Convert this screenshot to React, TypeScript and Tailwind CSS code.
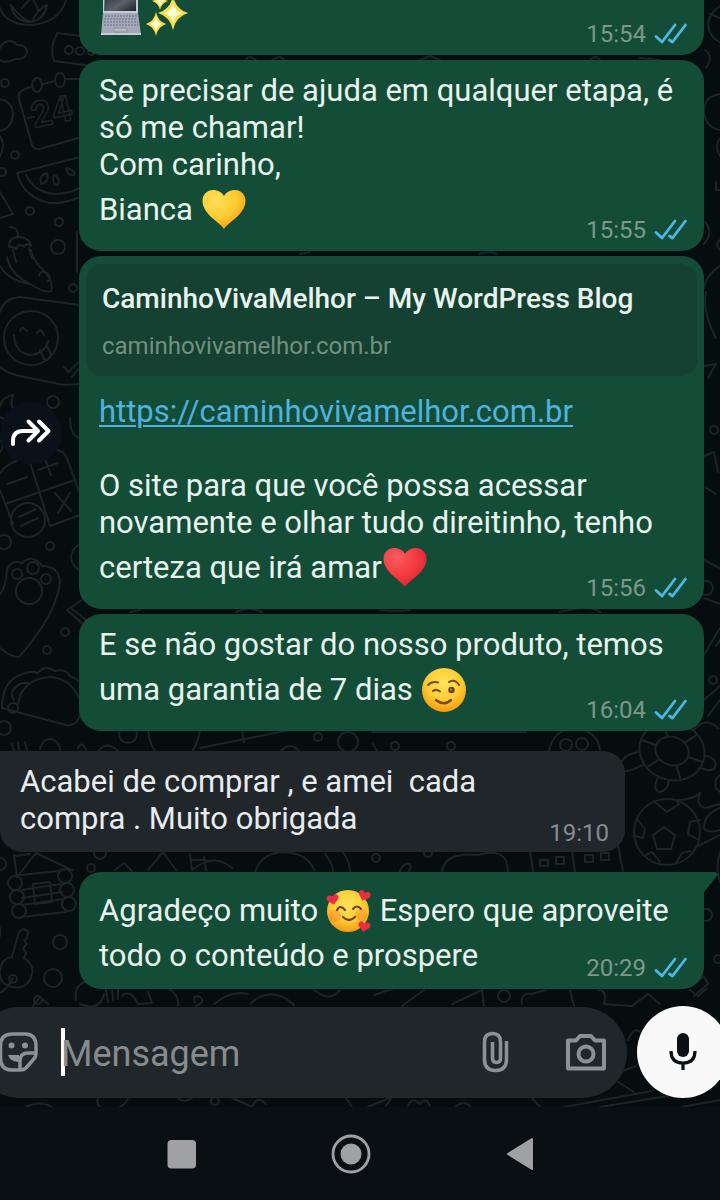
import type { ReactNode } from "react";

interface BubbleProps {
  time: string;
  children: ReactNode;
  preview?: ReactNode;
  tail?: boolean;
}

function Wallpaper() {
  return (
    <svg
      aria-hidden="true"
      className="absolute inset-0 w-full h-full"
      fill="none"
      stroke="#1b2427"
      strokeWidth="2"
      strokeLinecap="round"
      strokeLinejoin="round"
    >
      {/* bowl, cloud, radio */}
      <path d="M0 8Q6 25 32 25Q60 22 66 0M11 5Q14 22 32 22Q45 18 47 5Q38 8 32 22Q22 20 11 5M22 8Q26 2 32 -2Q38 6 38 12M0 48Q5 38 14 42Q18 46 18 45Q27 45 27 52Q26 60 15 59Q6 64 0 60" />
      <path d="M57 33L96 38M57 34Q49 48 54 61L92 66" />
      <circle cx="69" cy="50" r="4" />
      <circle cx="80" cy="51" r="4" />
      <circle cx="91" cy="52" r="3" />
      {/* calendar */}
      <path d="M33 86L25 89Q17 92 19 99L32 145Q34 150 40 149L82 137M44 84L54 81M67 79L82 79M28 118L34 117" />
      <ellipse cx="37" cy="85" rx="5" ry="7" />
      <ellipse cx="60" cy="80" rx="5" ry="7" />
      <text
        x="34"
        y="128"
        transform="rotate(-12 34 128)"
        fontSize="36"
        fontWeight="700"
        fontFamily="Roboto, sans-serif"
        strokeWidth="1.5"
      >
        24
      </text>
      <path d="M0 99Q13 102 13 115Q12 128 0 131M0 136Q6 145 0 156" />
      <circle cx="5" cy="83" r="4" />
      <circle cx="15" cy="155" r="4" />
      <circle cx="2" cy="172" r="4" />
      {/* watermelon */}
      <path d="M17 173Q24 198 50 203Q66 204 82 196M17 173L80 157M26 175Q34 192 54 194Q68 194 80 188M41 182Q39 175 47 173Q50 182 41 184M54 175Q61 178 58 185Q51 184 54 175M66 168Q76 170 74 175Q67 176 66 168M0 192L13 214L0 218" />
      <circle cx="30" cy="211" r="4" />
      <circle cx="59" cy="222" r="4" />
      <circle cx="58" cy="247" r="7" />
      {/* cherry cupcake and chilli */}
      <path d="M9 247Q9 237 19 237Q30 238 31 246Q26 242 24 247Q19 242 16 249Q12 246 9 247M18 236Q18 227 10 227M13 250L16 262M29 248L32 258M77 232L77 272M7 257Q10 274 30 284Q46 294 51 291Q54 284 45 272Q32 260 31 250M0 266Q8 280 30 284M39 276Q40 270 47 273Q52 277 48 281" />
      <circle cx="73" cy="288" r="4" />
      {/* laughing face on a cushion */}
      <path d="M0 312Q4 298 20 297L80 305M0 367Q8 374 24 377L64 385L82 384M14 335Q15 354 32 355Q45 353 48 341M20 331Q22 325 27 331M37 333Q41 327 44 335M40 350L44 359Q50 361 51 354L47 346M64 367L68 372L80 361M72 377L78 369" />
      <circle cx="31" cy="338" r="27" />
      <path d="M0 406Q2 397 13 395Q8 410 20 414Q10 423 0 417M70 418Q70 436 80 438M0 440Q6 446 0 452" />
      <circle cx="53" cy="402" r="6" />
      {/* calculator */}
      <path d="M0 473Q4 466 20 459L54 450Q63 449 67 458L80 494M0 490L13 524M29 459L50 526M5 504L75 480M8 484L27 477M38 470L58 463M45 459L51 475M55 493L71 511M70 493L58 513M50 526L80 515M19 517L36 509M21 526L38 518" />
      <circle cx="28" cy="520" r="17" />
      <circle cx="4" cy="542" r="7" />
      <circle cx="50" cy="546" r="4" />
      <path d="M80 544Q71 549 71 557Q72 567 80 570" />
      {/* paw */}
      <path d="M0 594Q6 588 7 570Q11 559 22 563Q32 553 42 566Q58 566 60 581Q58 612 20 656Q16 660 0 648M67 610L82 600M67 610L84 625M71 608L86 620" />
      <circle cx="29" cy="591" r="13" />
      <circle cx="17" cy="574" r="5" />
      <circle cx="33" cy="568" r="6" />
      <circle cx="46" cy="579" r="5" />
      <circle cx="65" cy="632" r="4" />
      <circle cx="47" cy="650" r="4" />
      {/* taco */}
      <path d="M2 708Q2 682 20 675Q30 670 38 673Q45 664 55 671Q66 668 70 676Q76 678 82 684M2 708L66 725Q82 727 80 704M18 704Q22 678 52 677Q72 680 80 700M14 700Q8 690 20 684M14 690Q20 680 30 684" />
      <circle cx="13" cy="708" r="5" />
      <circle cx="4" cy="728" r="7" />
      {/* strip above the incoming message */}
      <path d="M148 730Q150 746 156 752M200 730Q198 742 192 752M242 730L244 742M200 748L290 730M12 744L14 751M18 742L19 751M25 742L27 751M40 749Q44 736 54 740Q60 744 60 750M78 748Q82 740 86 750M98 752Q106 740 118 751M280 752Q290 740 300 752M372 732L526 732M373 744L377 751M549 751Q553 730 574 728Q597 730 600 750" />
      <circle cx="128" cy="734" r="9" />
      <circle cx="318" cy="737" r="4" />
      <circle cx="348" cy="742" r="10" />
      <circle cx="395" cy="746" r="4" />
      <circle cx="451" cy="746" r="4" />
      <circle cx="566" cy="745" r="6" />
      <circle cx="582" cy="744" r="6" />
      {/* turtle */}
      <g transform="rotate(20 672 751)">
        <ellipse cx="672" cy="751" rx="33" ry="29" />
        <ellipse cx="672" cy="751" rx="17" ry="14" />
        <path d="M655 751H639M689 751H705M663 739L654 727M681 739L690 727M663 763L654 775M681 763L690 775M640 738Q628 730 634 724Q642 722 650 732M704 744Q718 742 718 752Q716 758 704 757M650 773Q634 792 628 784Q626 772 640 764M668 780Q666 794 674 794Q682 790 679 780" />
      </g>
      <path d="M720 775Q713 780 716 788L720 792M694 730Q705 716 718 728" />
      {/* football with a flame */}
      <circle cx="667" cy="832" r="33" />
      <path d="M664 827L675 835L671 849H657L653 835ZM655 802L667 812L679 804L677 800M637 819L645 829L643 838L634 836M700 820L690 822L688 834L697 839M646 855L652 852L660 862M690 851L682 853L676 863M678 800Q692 800 700 793Q695 806 706 808L720 804M720 808Q704 814 704 828Q708 834 720 830M698 846L720 835M720 852Q715 868 720 882" />
      {/* strip under the incoming message */}
      <path d="M14 855L17 877M14 856L30 854M17 877L36 853L72 870M115 870L124 863L132 871M148 870L163 852L176 870M190 854L192 870M204 857L206 870M192 860H206M192 870Q214 852 232 868M255 872Q262 852 285 852Q308 854 314 870M325 854Q332 862 333 871M343 852Q350 862 350 871M442 872Q444 852 478 855Q508 846 508 872M400 871Q404 862 410 864Q412 868 408 872M530 852L533 872M572 852L575 872M618 846L623 871M540 860H548V866H540ZM556 857H564V864H556ZM585 855H593V862H585ZM601 853H609V860H601Z" />
      <circle cx="100" cy="853" r="6" />
      <circle cx="91" cy="868" r="4" />
      <circle cx="0" cy="864" r="6" />
      <circle cx="376" cy="858" r="4" />
      <circle cx="428" cy="853" r="4" />
      {/* log cabin */}
      <path d="M20 875L60 871M21 917L66 912M22 890L61 884M22 898L62 892M22 905L64 899M33 884L50 882L52 902L35 904Z" />
      <circle cx="15" cy="883" r="7" />
      <circle cx="17" cy="897" r="7" />
      <circle cx="19" cy="911" r="7" />
      <circle cx="65" cy="876" r="7" />
      <circle cx="67" cy="890" r="7" />
      <circle cx="69" cy="904" r="7" />
      {/* key */}
      <path d="M12 957L19 932Q24 926 28 932L27 938L24 940L27 944L23 948L26 953L24 958Q34 964 32 974Q28 990 12 987Q-2 984 0 970Q2 958 12 957M13 978Q6 992 -4 994M0 928V936" />
      <circle cx="13" cy="979" r="4" />
      <circle cx="60" cy="942" r="7" />
      <circle cx="53" cy="978" r="9" />
      {/* strip above the composer */}
      <path d="M76 1000Q74 986 84 982M33 1006L40 997L48 1004M80 1004Q100 1012 104 994M106 990L108 1002M112 990L113 1000M118 988V999M122 996Q130 988 138 1004L152 1003L148 992M168 988Q180 996 178 1006M195 1003Q192 994 200 997Q206 1002 196 1006M214 1004Q232 990 248 994M250 1004Q272 984 294 1005M312 988Q330 1004 340 990M374 995L392 989M402 1006L424 990M452 1004L482 990L484 1006M522 1004Q520 992 532 994L546 990M570 990L574 1006M598 990Q608 990 604 1004L632 1006L648 994L660 1004M690 990L698 996L706 989" />
      <circle cx="504" cy="996" r="6" />
      <circle cx="38" cy="1000" r="4" />
      {/* right edge */}
      <path d="M720 6Q708 14 708 25Q710 38 720 42M710 14L720 18M705 50Q714 56 706 68M720 94Q704 96 704 112Q706 128 720 130M720 138Q714 146 720 156M716 182V190H720M705 222Q714 232 704 244M720 240Q714 244 720 250M720 266Q706 274 704 288M706 292Q702 312 716 338M704 366L716 364L708 378M704 456L714 452L718 472M706 488L716 494M704 560L720 568M704 598L720 604M704 655L720 628M716 646L720 640M704 700L720 686M708 716L720 700" />
      <circle cx="713" cy="680" r="4" />
      <circle cx="714" cy="430" r="4" />
      <circle cx="706" cy="588" r="7" />
      <circle cx="706" cy="915" r="6" />
      <circle cx="718" cy="959" r="4" />
      <path d="M690 987L704 976L708 984L694 996" />
      {/* strips between and under */}
      <path d="M246 60Q248 54 256 60M272 60Q280 54 284 60M420 60L430 56L440 60M600 60Q596 54 590 60M640 58L660 60M300 254L310 252M480 254Q490 250 496 254M130 612L140 610M236 612Q250 606 262 612M380 610Q396 612 410 610M560 612Q590 604 600 612M26 1107Q40 1100 52 1107M98 1098Q96 1104 100 1107M128 1098Q126 1104 120 1107M178 1098Q184 1104 192 1098M232 1098L250 1106M252 1107Q258 1094 266 1104M346 1098L352 1107M368 1107L392 1097L386 1106M408 1106Q412 1096 420 1104Q426 1096 430 1106M456 1106Q464 1100 470 1106M532 1098L540 1107M564 1107L652 1091M600 1107L680 1094M682 1107L720 1100M618 1082L634 1092M620 1072L636 1066M628 1040Q634 1026 640 1032" />
      <circle cx="215" cy="1101" r="4" />
    </svg>
  );
}

// Emoji boxes are 46x53 and hang 16px under the baseline, like the glyphs of a colour font.
function Emoji({ label, children }: { label: string; children: ReactNode }) {
  return (
    <svg
      role="img"
      aria-label={label}
      viewBox="0 0 46 53"
      className="inline-block w-[46px] h-[53px] align-[-16px]"
    >
      {children}
    </svg>
  );
}

const HEART =
  "M23 46C19 39 2 32 1.500 18C1.500 11 6.500 7 12 7C17 7 21 9.500 23 13C25 9.500 29 7 34 7C39.500 7 44.500 11 44.500 18C44 32 27 39 23 46Z";

function YellowHeart() {
  return (
    <Emoji label="coração amarelo">
      <defs>
        <radialGradient id="yh" cx="0.32" cy="0.25" r="0.9">
          <stop offset="0" stopColor="#ffe05a" />
          <stop offset="0.5" stopColor="#ffcb33" />
          <stop offset="1" stopColor="#f0940e" />
        </radialGradient>
      </defs>
      <path d={HEART} fill="url(#yh)" />
    </Emoji>
  );
}

function RedHeart() {
  return (
    <Emoji label="coração vermelho">
      <defs>
        <radialGradient id="rh" cx="0.32" cy="0.25" r="0.9">
          <stop offset="0" stopColor="#fa5c5e" />
          <stop offset="0.5" stopColor="#f53b40" />
          <stop offset="1" stopColor="#cc1c2a" />
        </radialGradient>
      </defs>
      <path d={HEART} fill="url(#rh)" />
    </Emoji>
  );
}

function FaceFill({ id }: { id: string }) {
  return (
    <defs>
      <radialGradient id={id} cx="0.5" cy="0.35" r="0.65">
        <stop offset="0" stopColor="#ffe45c" />
        <stop offset="0.6" stopColor="#ffcc33" />
        <stop offset="1" stopColor="#f39a14" />
      </radialGradient>
    </defs>
  );
}

function Wink() {
  return (
    <Emoji label="rosto piscando">
      <FaceFill id="wk" />
      <circle cx="23" cy="27" r="22" fill="url(#wk)" />
      <g fill="none" stroke="#7a4b1c" strokeWidth="2" strokeLinecap="round">
        <path d="M7 22Q11 18 17 19.500M28 19Q34 15.500 38 22M12 28Q15 25.500 19 28.500" />
        <path d="M15 37Q23 43.500 30 37" strokeWidth="2.500" />
      </g>
      <circle cx="30.500" cy="27" r="3.200" fill="#6d431c" />
      <circle cx="30" cy="26.500" r="1" fill="#b98a5a" />
    </Emoji>
  );
}

function SmilingHearts() {
  const heart = "M0 5C-1 3 -6 1 -6 -2C-6 -6 -1.500 -6 0 -3C1.500 -6 6 -6 6 -2C6 1 1 3 0 5Z";
  return (
    <Emoji label="rosto sorridente com corações">
      <FaceFill id="sh" />
      <circle cx="22" cy="27" r="21" fill="url(#sh)" />
      <circle cx="9" cy="32" r="6" fill="#f5762c" opacity="0.35" />
      <circle cx="35" cy="31" r="6" fill="#f5762c" opacity="0.35" />
      <g fill="none" stroke="#6d431c" strokeWidth="2.200" strokeLinecap="round">
        <path d="M11 26Q14 20 19 26M27 25Q31 20 35 25M17 33Q23 39 29 33" />
      </g>
      <g fill="#ee2b45">
        <path d={heart} transform="translate(7 16) rotate(-12)" />
        <path d={heart} transform="translate(38 12) rotate(20)" />
        <path d={heart} transform="translate(38 43) rotate(12)" />
      </g>
    </Emoji>
  );
}

function Laptop() {
  return (
    <Emoji label="computador">
      <defs>
        <linearGradient id="lp" x1="0" y1="0" x2="1" y2="1">
          <stop offset="0" stopColor="#1f2428" />
          <stop offset="0.6" stopColor="#59636a" />
          <stop offset="1" stopColor="#1d2226" />
        </linearGradient>
      </defs>
      <path d="M4 0H39L39 26H4Z" fill="#c5cad3" />
      <path d="M6 2H37V24H5Z" fill="url(#lp)" />
      <path d="M4 26H39L42 48H2Z" fill="#a3a8b8" />
      <path d="M2 46H42V48H2Z" fill="#c8ccd5" />
      <path d="M6 29H38M5 32H38M5 35H39M5 38H39" stroke="#7c8294" strokeWidth="1.500" strokeDasharray="2 1" />
      <path d="M15 41H28V45H15Z" fill="#b3b6bd" stroke="#8b909c" strokeWidth="1" />
    </Emoji>
  );
}

function Sparkles() {
  const star = "M0 -1Q0.200 -0.200 1 0Q0.200 0.200 0 1Q-0.200 0.200 -1 0Q-0.200 -0.200 0 -1Z";
  return (
    <Emoji label="brilhos">
      <g fill="#f9dc4a">
        <path d={star} transform="translate(28 26) scale(15 17)" />
        <path d={star} transform="translate(11 37) scale(10 12)" />
        <path d={star} transform="translate(15 14) scale(8 9)" />
      </g>
      <g fill="#fffbd0">
        <path d={star} transform="translate(28 26) scale(9 10)" />
        <path d={star} transform="translate(11 37) scale(6 7)" />
        <path d={star} transform="translate(15 14) scale(5 5)" />
      </g>
    </Emoji>
  );
}

function Checks() {
  return (
    <svg
      role="img"
      aria-label="lida"
      viewBox="0 0 34 22"
      className="w-[34px] h-[22px]"
      fill="none"
      stroke="#4fb7e2"
      strokeWidth="2.800"
      strokeLinecap="round"
      strokeLinejoin="round"
    >
      <path d="M2 13.500L8 19L21 2M15.500 17L18.500 19L31.500 2" />
    </svg>
  );
}

function SentBubble({ time, children, preview, tail }: BubbleProps) {
  return (
    <article
      className={`relative flex-1 grid bg-[#144d37] rounded-[22px] ${
        tail ? "rounded-tr-none" : ""
      }`}
    >
      <div className="col-start-1 row-start-1">
        {preview}
        <p className="px-5 pt-3 pb-[15px] whitespace-pre-wrap">{children}</p>
      </div>
      <div className="col-start-1 row-start-1 self-end justify-self-end flex items-center gap-2 pr-4 pb-[6px] text-2xl leading-[30px] text-[#7d988b]">
        <time>{time}</time>
        <Checks />
      </div>
      {tail && (
        <svg
          aria-hidden="true"
          viewBox="0 0 14 22"
          className="absolute left-full top-0 w-[14px] h-[22px]"
          fill="#144d37"
        >
          <path d="M-1 0H11Q15 1 13 4L0 20V22H-1Z" />
        </svg>
      )}
    </article>
  );
}

function LinkPreview() {
  return (
    <a
      href="https://caminhovivamelhor.com.br"
      className="block mt-2 mx-[7px] mb-[5px] h-[112px] px-4 pt-[19px] rounded-2xl bg-[#144132]"
    >
      <strong className="block font-medium text-[28px] leading-8">
        CaminhoVivaMelhor – My WordPress Blog
      </strong>
      <span className="block mt-4 text-2xl leading-[30px] text-[#72917f]">
        caminhovivamelhor.com.br
      </span>
    </a>
  );
}

function Composer() {
  return (
    <form
      className="flex items-center gap-[10px] mt-[17px] mb-[9px]"
      onSubmit={(e) => e.preventDefault()}
    >
      <div className="flex-1 min-w-0 flex items-center h-[91px] -ml-[26px] pl-[25px] pr-[20px] rounded-full bg-[#20272a] text-[#8b9296]">
        <button type="button" aria-label="Figurinhas">
          <svg viewBox="0 0 40 40" className="w-10 h-10" fill="none" stroke="currentColor" strokeWidth="3.500" strokeLinejoin="round">
            <path d="M13 2H26Q37 2 37 14V22Q37 25 34 28L27 36Q25 38 21 38H13Q1.500 38 1.500 26V14Q1.500 2 13 2Z" />
            <path d="M21 37V29Q21 21 29 21H37" />
            <path d="M9 23H20V30Q11 30 9 23Z" fill="currentColor" stroke="none" />
            <circle cx="12.500" cy="13.500" r="3" fill="currentColor" stroke="none" />
            <circle cx="26" cy="13.500" r="3" fill="currentColor" stroke="none" />
          </svg>
        </button>
        <span aria-hidden="true" className="w-1 h-12 ml-[22px] bg-white" />
        <input
          type="text"
          aria-label="Mensagem"
          placeholder="Mensagem"
          className="flex-1 min-w-0 -ml-1 pt-1 text-[36px] leading-[44px] bg-transparent outline-none placeholder:text-[#868c8f] placeholder:opacity-100"
        />
        <button type="button" aria-label="Anexar" className="mx-[55px]">
          <svg viewBox="0 0 28 42" className="w-7 h-[42px]" fill="none" stroke="currentColor" strokeWidth="3.500" strokeLinecap="butt">
            <path d="M24.500 10V28.500Q24.500 39.500 13.500 39.500Q2.500 39.500 2.500 28.500V11Q2.500 2.500 10.500 2.500Q18.500 2.500 18.500 11V27Q18.500 31.500 14.500 31.500Q10.500 31.500 10.500 27V11" />
          </svg>
        </button>
        <button type="button" aria-label="Câmera">
          <svg viewBox="0 0 42 40" className="w-[42px] h-10" fill="none" stroke="currentColor" strokeWidth="4" strokeLinejoin="round">
            <path d="M3 8.500H11L15 4H26L30 8.500H39V36.500H3Z" />
            <circle cx="21" cy="22" r="7.500" />
          </svg>
        </button>
      </div>
      <button
        type="button"
        aria-label="Gravar áudio"
        className="shrink-0 flex items-center justify-center w-[92px] h-[92px] -mr-[9px] rounded-full bg-[#f9f9f9] text-[#0b1014]"
      >
        <svg viewBox="0 0 30 40" className="w-[30px] h-10" fill="none" stroke="currentColor" strokeWidth="3">
          <rect x="9" y="1" width="12" height="24" rx="6" fill="currentColor" stroke="none" />
          <path d="M3 19Q3 31 15 31Q27 31 27 19M15 31V38" strokeWidth="3.200" />
        </svg>
      </button>
    </form>
  );
}

export default function App() {
  return (
    <main
      lang="pt-BR"
      className="h-screen flex flex-col overflow-hidden bg-[#0a0f13] font-['Roboto',sans-serif] text-[31px] leading-[37px] text-[#e9f3ee]"
    >
      <div className="relative flex-1 min-h-0 flex flex-col justify-end overflow-hidden bg-[#060d0f]">
        <Wallpaper />

        <section className="relative flex flex-col pr-4">
          <div className="flex pl-[79px]">
            <SentBubble time="15:54">
              <Laptop />
              <Sparkles />
            </SentBubble>
          </div>

          <div className="flex pl-[79px] mt-[5px]">
            <SentBubble time="15:55">
              {"Se precisar de ajuda em qualquer etapa, é só me chamar!\nCom carinho,\nBianca "}
              <YellowHeart />
            </SentBubble>
          </div>

          <div className="flex items-center mt-[5px]">
            <button
              type="button"
              aria-label="Encaminhar"
              className="shrink-0 w-[62px] h-[62px] mr-[17px] rounded-full bg-[#0a1118] text-white"
            >
              <svg viewBox="0 0 62 62" className="w-[62px] h-[62px]" fill="none" stroke="currentColor" strokeWidth="4" strokeLinecap="round" strokeLinejoin="round">
                <path d="M13 42V39Q13 29 23 29H37M28.500 19.500L38 29L28.500 38.500M39 19.500L48.500 29L39 38.500" />
              </svg>
            </button>
            <SentBubble time="15:56" preview={<LinkPreview />}>
              <a href="https://caminhovivamelhor.com.br" className="text-[#4fb3df] underline decoration-2 underline-offset-3">
                https://caminhovivamelhor.com.br
              </a>
              {"\n\nO site para que você possa acessar novamente e olhar tudo direitinho, tenho certeza que irá amar"}
              <RedHeart />
            </SentBubble>
          </div>

          <div className="flex pl-[79px] mt-[5px]">
            <SentBubble time="16:04">
              {"E se não gostar do nosso produto, temos uma garantia de 7 dias "}
              <Wink />
            </SentBubble>
          </div>

          <article className="grid mt-5 mr-[79px] rounded-[22px] rounded-tl-none bg-[#20262a] text-[#e8ecee]">
            <p className="col-start-1 row-start-1 px-5 pt-3 pb-[15px] whitespace-pre-wrap">
              {"Acabei de comprar , e amei  cada\ncompra . Muito obrigada"}
            </p>
            <time className="col-start-1 row-start-1 self-end justify-self-end pr-4 pb-1 text-2xl leading-[30px] text-[#858b8f]">
              19:10
            </time>
          </article>

          <div className="flex pl-[79px] mt-5">
            <SentBubble time="20:29" tail>
              {"Agradeço muito "}
              <SmilingHearts />
              {" Espero que aproveite todo o conteúdo e prospere"}
            </SentBubble>
          </div>
        </section>

        <div className="relative">
          <Composer />
        </div>
      </div>

      <nav className="shrink-0 h-[93px] flex items-center justify-center gap-[121px] pr-[18px] text-[#9fa1a4]">
        <button type="button" aria-label="Recentes">
          <svg viewBox="0 0 48 48" className="w-12 h-12" fill="currentColor">
            <rect x="9.500" y="10" width="28.500" height="28.500" rx="4" />
          </svg>
        </button>
        <button type="button" aria-label="Início">
          <svg viewBox="0 0 48 48" className="w-12 h-12" fill="currentColor">
            <circle cx="24" cy="24" r="18" fill="none" stroke="currentColor" strokeWidth="2.800" />
            <circle cx="24" cy="24" r="10.500" />
          </svg>
        </button>
        <button type="button" aria-label="Voltar">
          <svg viewBox="0 0 48 48" className="w-12 h-12" fill="currentColor" stroke="currentColor" strokeWidth="2" strokeLinejoin="round">
            <path d="M12 24L36 9V39Z" />
          </svg>
        </button>
      </nav>
    </main>
  );
}
